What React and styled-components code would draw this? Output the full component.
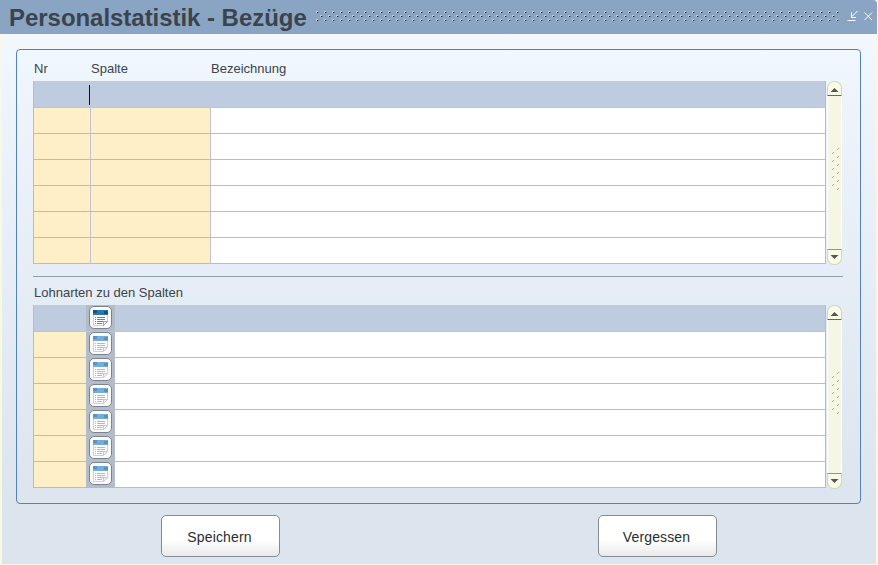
import React from 'react';
import styled, { createGlobalStyle } from 'styled-components';

const GlobalStyle = createGlobalStyle`
	body {
		margin: 0;
		overflow: hidden;
		font-family: 'Liberation Sans', Arial, sans-serif;
		color: #3b434b;
	}

	* {
		box-sizing: border-box;
	}
`;

const Window = styled.div`
	width: 878px;
	height: 565px;
	display: flex;
	flex-direction: column;
	background: #f8f8e4;
`;

const TitleBar = styled.header`
	width: 877px;
	height: 34px;
	flex: none;
	display: flex;
	align-items: center;
	padding-left: 9px;
	background: #8aa5c4;
	border-top-right-radius: 4px;

	& .grip {
		margin-left: 8px;
	}

	& .controls {
		margin-left: 6px;
	}
`;

const Title = styled.h1`
	margin: 2px 0 0;
	width: 299px;
	font-size: 24px;
	line-height: 30px;
	letter-spacing: -0.04px;
	white-space: nowrap;
	color: #3b434c;
`;

const Body = styled.main`
	width: 874px;
	height: 530px;
	margin-left: 2px;
	padding: 15px 0 0 14px;
	background: linear-gradient(#f2f8fe, #edf4fc 12%, #dce4ee 90%);
`;

const Panel = styled.section`
	width: 845px;
	height: 455px;
	padding: 11px 17px 0 16px;
	border: 1px solid #5482b8;
	border-radius: 4px;
`;

const Labels = styled.div`
	display: flex;
	height: 20px;
	padding-left: 1px;
	font-size: 13px;
	line-height: 16px;
`;

const Label = styled.span`
	width: ${props => props.$width};
	white-space: nowrap;
`;

const Block = styled.div`
	display: flex;
	gap: 1px;
`;

const Grid = styled.div`
	width: 793px;
	height: 183px;
	border-left: 1px solid #b0bccf;
	border-right: 1px solid #b0bccf;
`;

const Row = styled.div`
	display: flex;
	height: ${props => (props.$active ? '27px' : '26px')};
	border-bottom: 1px solid #b4bdcb;
	${props => props.$active && 'border-bottom-color: #bac6d8;'}
	background: ${props => (props.$active ? '#bfcbde' : '#fff')};
`;

const Cell = styled.div`
	width: ${props => props.$width};
	background: ${props => (props.$key ? '#feefc6' : 'transparent')};
	border-right: ${props => (props.$line ? '1px solid #bfc3d4' : '0')};
`;

const Caret = styled.div`
	width: 1px;
	height: 20px;
	margin: 4px 0 0 55px;
	background: #111;
`;

const IconCell = styled.div`
	width: 29px;
	height: 26px;
	padding: ${props => (props.$active ? '1px' : '0')} 0 0 3px;
	background: #b3bdca;
`;

const ListButton = styled.button`
	display: block;
	width: 23px;
	height: 23px;
	margin: 0;
	padding: 2px 0 0 3px;
	border: 1px solid #7d838c;
	border-radius: 5px;
	background: #fafafb;
	line-height: 0;
	text-align: left;
`;

const Divider = styled.div`
	width: 810px;
	height: 1px;
	margin: 11px 0 8px;
	background: #929cab;
`;

const Scroll = styled.div`
	width: 15px;
	height: 184px;
	display: flex;
	flex-direction: column;
	align-items: center;
`;

const ScrollCap = styled.div`
	width: 15px;
	height: ${props => (props.$down ? '16px' : '15px')};
	padding-top: ${props => (props.$down ? '5px' : '6px')};
	display: flex;
	justify-content: center;
	border: 1px solid #d3d8b0;
	border-radius: ${props => (props.$down ? '0 0 7px 7px' : '7px 7px 0 0')};
	${props => (props.$down ? 'border-top-color: #92967a;' : 'border-bottom-color: #66685e;')}
	background: #fafae8;
`;

const Track = styled.div`
	width: 15px;
	flex: 1;
	display: flex;
	justify-content: center;
	padding: 50px 0 0 2px;
	border: solid #fff;
	border-width: 0 1px;
	background: #f5f6e3;
`;

const Actions = styled.footer`
	display: flex;
	padding: 11px 0 0 145px;
	gap: 318px;
`;

const ActionButton = styled.button`
	width: 119px;
	height: 42px;
	padding: 1px 2px 0 0;
	border: 1px solid #868a91;
	border-radius: 5px;
	background: linear-gradient(#fff 60%, #e9e9ea);
	color: #292c30;
	font-family: inherit;
	font-size: 14px;
	letter-spacing: 0.15px;
`;

const TitleGrip = () => (
	<svg className="grip" width="524" height="12" shapeRendering="crispEdges">
		<defs>
			<pattern id="title-grip" width="8" height="8" patternUnits="userSpaceOnUse">
				<path d="M0 0h2v1h-1v1h-1zM4 4h2v1h-1v1h-1z" fill="#b9cec8" />
				<path d="M1 1h1v1h-1zM5 5h1v1h-1z" fill="#1f272e" />
				<path d="M2 1h1v1h-1zM6 5h1v1h-1z" fill="#65788d" />
			</pattern>
		</defs>
		<rect width="524" height="12" fill="url(#title-grip)" />
	</svg>
);

const WindowControls = () => (
	<svg className="controls" width="28" height="14" fill="none" stroke="#fff">
		<path d="M11.5 1L6 6.5M5.5 2.5V7.5H10M1.5 10.5H9.5" />
		<path d="M18.5 2.5L26 10M26 2.5L18.5 10" />
	</svg>
);

const ListIcon = ({ active }) => (
	<svg width="15" height="17">
		<path d="M.5 1v14.5h10l4-4V1z" fill="#fff" stroke="#cbd0d5" />
		<path d="M0 0h15v5H0z" fill={active ? '#2878ad' : '#77acd5'} />
		<path d="M0 0h4v3H0zM11 1h4v3h-4z" fill={active ? '#155482' : '#5794c4'} />
		<path
			d="M2 7.5h1M4 7.5h8M2 9.5h1M4 9.5h8M2 11.5h1M4 11.5h7M2 13.5h1M4 13.5h5"
			stroke={active ? '#777f87' : '#b3b8bd'}
		/>
		<path d="M10.5 15.5v-4h4z" fill="#f2f2f2" stroke={active ? '#9ca3ab' : '#c6cacf'} />
	</svg>
);

const ScrollBar = () => (
	<Scroll>
		<ScrollCap>
			<svg width="9" height="4"><path d="M.5 4L4.5 0L8.5 4z" fill="#55564d" /></svg>
		</ScrollCap>
		<Track>
			<svg width="8" height="46" stroke="#a9ab7d">
				{[0, 1, 2, 3, 4].map(i => (
					<path key={i} d={`M0 ${i * 8 + 8}l2-2M5 ${i * 8 + 4}l2-2`} />
				))}
				<path d="M5 44l2-2" />
			</svg>
		</Track>
		<ScrollCap $down>
			<svg width="9" height="4"><path d="M.5 0H8.5L4.5 4z" fill="#55564d" /></svg>
		</ScrollCap>
	</Scroll>
);

const rows = [0, 1, 2, 3, 4, 5, 6];

const App = () => (
	<>
		<GlobalStyle />
		<Window>
			<TitleBar>
				<Title>Personalstatistik - Bezüge</Title>
				<TitleGrip />
				<WindowControls />
			</TitleBar>
			<Body>
				<Panel>
					<Labels>
						<Label $width="57px">Nr</Label>
						<Label $width="120px">Spalte</Label>
						<Label>Bezeichnung</Label>
					</Labels>
					<Block>
						<Grid>
							{rows.map(i => (
								<Row key={i} $active={i === 0}>
									<Cell $width="57px" $key={i > 0} $line={i > 0}>
										{i === 0 && <Caret />}
									</Cell>
									<Cell $width="120px" $key={i > 0} $line={i > 0} />
								</Row>
							))}
						</Grid>
						<ScrollBar />
					</Block>
					<Divider />
					<Labels>
						<Label>Lohnarten zu den Spalten</Label>
					</Labels>
					<Block>
						<Grid>
							{rows.map(i => (
								<Row key={i} $active={i === 0}>
									<Cell $width="52px" $key={i > 0} />
									<IconCell $active={i === 0}>
										<ListButton>
											<ListIcon active={i === 0} />
										</ListButton>
									</IconCell>
								</Row>
							))}
						</Grid>
						<ScrollBar />
					</Block>
				</Panel>
				<Actions>
					<ActionButton>Speichern</ActionButton>
					<ActionButton>Vergessen</ActionButton>
				</Actions>
			</Body>
		</Window>
	</>
);

export default App;
